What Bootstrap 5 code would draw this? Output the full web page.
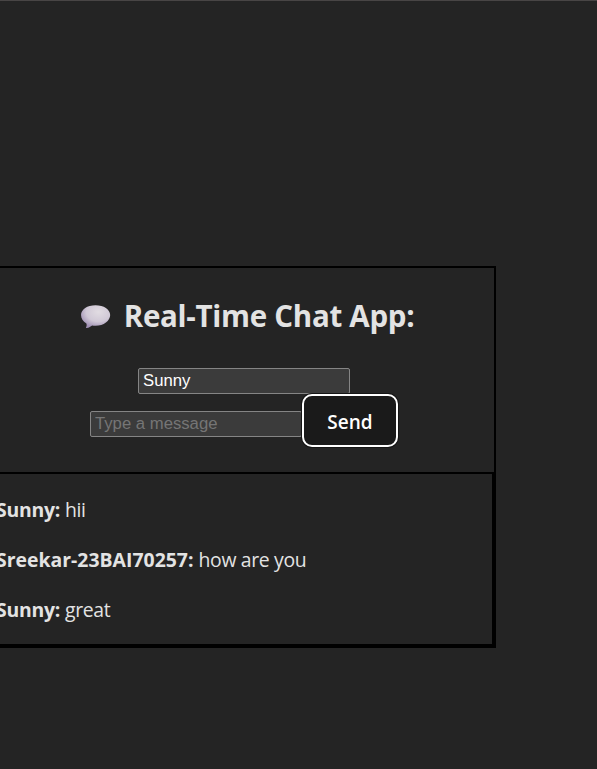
<!DOCTYPE html>
<html lang="en" data-bs-theme="dark">
<head>
<meta charset="utf-8">
<meta name="viewport" content="width=device-width, initial-scale=1">
<title>Real-Time Chat App</title>
<link href="https://cdn.jsdelivr.net/npm/bootstrap@5.3.0/dist/css/bootstrap.min.css" rel="stylesheet">
<style>
body{height:769px;background:#242424;color:#e3e3e3;font-family:"Open Sans","Noto Sans",sans-serif;border-top:1px solid #484545}
.chat-app{width:504px;height:382px;margin:265px 0 0 -8px;border:2px solid #000}
.chat-title{color:#e3e3e3;font-size:29.5px;line-height:40px;margin-top:28px;padding-left:6px;gap:13px;letter-spacing:-.28px}
.bubble{width:31px;height:25px;margin-top:0}
.chat-input,.chat-input:focus{width:212px;height:26px;padding:0 4px;border:1px solid #858585;border-radius:2px;background:#3b3b3b;color:#fff;font:16.7px/24px "Liberation Sans",Arial,sans-serif}
.chat-input::placeholder{color:#757575;opacity:1}
.name-input{margin-top:32px}
.message-input{margin-top:6px}
.send-btn,.send-btn:hover{width:96px;height:53px;border:2px solid #fff;border-radius:10px;background:#1a1a1a;color:#fff;font-size:19px;font-weight:600;box-shadow:0 0 0 1px #151515}
.send-btn span{display:block;padding-top:4px}
.messages{height:174px;margin-top:25px;border:2px solid #000;padding-top:21px;font-size:19.4px;line-height:30px}
.messages p{margin-bottom:20px;white-space:nowrap}
.messages strong{font-weight:700;letter-spacing:-.25px}
.messages .long-name{letter-spacing:.02px}
.messages span{letter-spacing:-.35px}
</style>
<script src="https://cdn.jsdelivr.net/npm/bootstrap@5.3.0/dist/js/bootstrap.bundle.min.js"></script>
</head>
<body class="overflow-hidden">
<main class="chat-app d-flex flex-column">
  <h1 class="chat-title d-flex justify-content-center align-items-center fw-bold mb-0">
    <svg class="bubble" viewBox="0 0 30 24" aria-hidden="true">
      <defs><radialGradient id="shade" cx=".6" cy=".3" r=".7"><stop offset="0" stop-color="#e1dce2"/><stop offset=".6" stop-color="#d0c8d6"/><stop offset="1" stop-color="#9f8fb3"/></radialGradient></defs>
      <path fill="url(#shade)" d="M15 1C23 1 29.200 5 29.200 10.500S23 21 15 21c-1.300 0-2.200-.1-3.300-.3-1.300 1.200-3 2-5.200 2.500-.7.100-.9-.4-.5-.9.500-1 .6-2.200.2-3.500C2.800 16.800 1 13.900 1 10.500 1 5 7 1 15 1Z"/>
    </svg>
    <span>Real-Time Chat App:</span>
  </h1>
  <input class="chat-input name-input align-self-center" type="text" value="Sunny" aria-label="Name">
  <form class="d-flex justify-content-center align-items-center" onsubmit="return false">
    <input class="chat-input message-input" type="text" placeholder="Type a message" aria-label="Message">
    <button class="btn send-btn p-0" type="submit"><span>Send</span></button>
  </form>
  <section class="messages">
    <p><strong>Sunny:</strong> <span>hii</span></p>
    <p><strong class="long-name">Sreekar-23BAI70257:</strong> <span>how are you</span></p>
    <p class="mb-0"><strong>Sunny:</strong> <span>great</span></p>
  </section>
</main>
</body>
</html>
